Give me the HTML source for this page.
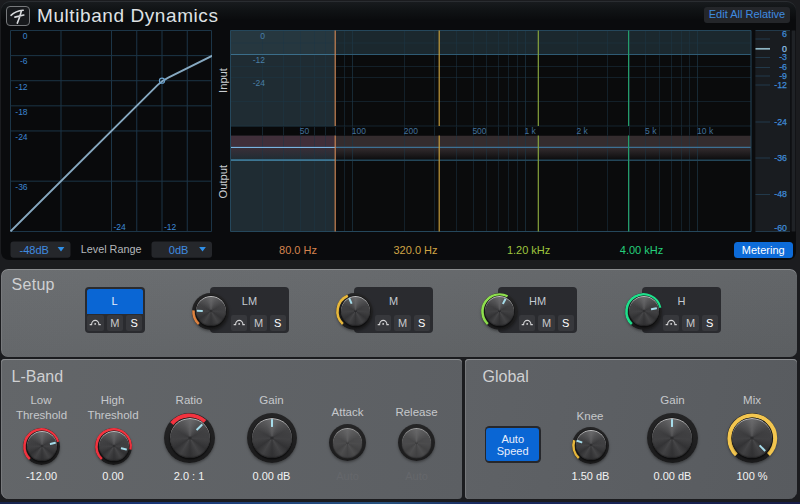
<!DOCTYPE html>
<html><head><meta charset="utf-8"><title>Multiband Dynamics</title>
<style>
html,body{margin:0;padding:0}
body{width:800px;height:504px;overflow:hidden;background:#1b1c1f;font-family:"Liberation Sans",Arial,sans-serif;position:relative}
.abs{position:absolute}
.top{left:1px;top:1.3px;width:795.4px;height:259px;background:linear-gradient(180deg,#191c1f 0,#111416 8px,#0a0b0d 19px,#0a0b0d 100%);border-radius:9px 9px 8px 8px;box-shadow:inset 0 1px 0 #2a2d31}
.panel{position:absolute;border-radius:7px;box-shadow:inset 0 1px 0 #8b8d90, inset 1px 0 0 #77797c}
.t{position:absolute;white-space:nowrap;line-height:1}
.c{transform:translateX(-50%);text-align:center}
.lab{color:#c6c8cb;font-size:11.5px}
.val{color:#f2f2f2;font-size:11px}
.h{color:#cfd0d2;font-size:16px}
.bl{color:#3e8ad8;font-size:9px}
.box{position:absolute;background:#2a2b2f;border-radius:4px}
.sb{position:absolute;background:#37383c;border-radius:2px;width:16.4px;height:15.6px;top:28.7px;color:#c9c9cb;font-size:11px;line-height:17.2px;text-align:center}
svg{position:absolute;left:0;top:0}
.kr{position:absolute;border-radius:50%;background:linear-gradient(180deg,#252526,#1b1b1c);box-shadow:0 1.5px 2.5px rgba(0,0,0,.35)}
.kc{position:absolute;border-radius:50%;background:radial-gradient(circle at 50% 50%,rgba(20,20,21,.55) 0,rgba(20,20,21,0) 9%),linear-gradient(180deg,rgba(255,255,255,.13) 0%,rgba(255,255,255,0) 45%,rgba(0,0,0,.16) 100%),conic-gradient(from 0deg,#575759 0deg,#464648 25deg,#39393b 60deg,#424244 95deg,#363638 125deg,#4a4a4c 150deg,#38383a 180deg,#4a4a4c 210deg,#363638 235deg,#424244 265deg,#39393b 300deg,#464648 335deg,#575759 360deg);box-shadow:inset 0 .9px .6px rgba(255,255,255,.55),inset 0 -1px 1px rgba(0,0,0,.3),0 0 0 .5px rgba(18,18,19,.9),0 1.6px 1.8px rgba(0,0,0,.65)}
.kd{filter:brightness(.9) contrast(.75)}
.kp{position:absolute;background:#a6dcea;border-radius:.4px}
</style></head><body>

<div class="abs top"></div>
<div class="panel" style="left:1px;top:269px;width:796px;height:87.5px;background:linear-gradient(180deg,rgba(255,255,255,.025),rgba(0,0,0,.035)),linear-gradient(100deg,#686b6e 0%,#5f6265 100%)"></div>
<div class="panel" style="left:1px;top:358.5px;width:461px;height:140.4px;border-radius:4px 4px 4px 8px;background:linear-gradient(100deg,#636669 0%,#5c5f63 100%)"></div>
<div class="panel" style="left:464.5px;top:358.5px;width:332.5px;height:140.4px;border-radius:4px 4px 8px 4px;background:linear-gradient(100deg,#5f6266 0%,#585b5f 100%)"></div>
<div class="abs" style="left:0;top:501.8px;width:800px;height:2.2px;background:linear-gradient(90deg,#18244c,#1a3778 20%,#27527f 48%,#192a60 60%,#171c47 100%)"></div>
<div class="abs" style="left:6px;top:6px;width:22px;height:18px;border:1px solid #77797c;border-radius:4px;background:#17191c"></div>
<div class="t" style="left:37px;top:5.6px;font-size:19px;letter-spacing:.58px;color:#dfe1e4">Multiband Dynamics</div>
<div class="t" style="left:703.7px;top:7.4px;width:86.6px;height:15.8px;background:#24262a;border-radius:3px;color:#3f8be0;font-size:11px;line-height:15.5px;text-align:center">Edit All Relative</div>
<div class="t" style="left:733.5px;top:241.5px;width:59.5px;height:16.5px;background:#0d6bd8;border-radius:3.5px;color:#fff;font-size:11px;line-height:16.5px;text-align:center">Metering</div>
<div class="box" style="left:84.5px;top:286.5px;width:60.5px;height:46.5px"><div class="abs" style="left:2px;top:2px;width:56.5px;height:25px;background:#0a66d4;border-radius:2.5px 2.5px 0 0"></div><div class="t c" style="left:30px;top:9.5px;font-size:11px;color:#e8eefc">L</div><div class="sb" style="left:2.8px"><svg width="16" height="16" viewBox="0 0 16 16" style="left:0;top:0"><path d="M2.7 9.6H4.6A3.65 4.2 0 0 1 11.9 9.6H13.8" fill="none" stroke="#d2d2d4" stroke-width="1.15"/><circle cx="8.2" cy="8.9" r=".95" fill="#d2d2d4"/></svg></div><div class="sb" style="left:22.1px">M</div><div class="sb" style="left:41.4px;color:#fff">S</div></div>
<div class="box" style="left:210px;top:286.5px;width:78.5px;height:46.5px;z-index:-0"><div class="t c" style="left:39.5px;top:9.5px;font-size:11px;color:#c3c9d0">LM</div><div class="sb" style="left:21px"><svg width="16" height="16" viewBox="0 0 16 16" style="left:0;top:0"><path d="M2.7 9.6H4.6A3.65 4.2 0 0 1 11.9 9.6H13.8" fill="none" stroke="#d2d2d4" stroke-width="1.15"/><circle cx="8.2" cy="8.9" r=".95" fill="#d2d2d4"/></svg></div><div class="sb" style="left:40.3px">M</div><div class="sb" style="left:59.6px;color:#fff">S</div></div>
<div class="box" style="left:354px;top:286.5px;width:78.5px;height:46.5px;z-index:-0"><div class="t c" style="left:39.5px;top:9.5px;font-size:11px;color:#c3c9d0">M</div><div class="sb" style="left:21px"><svg width="16" height="16" viewBox="0 0 16 16" style="left:0;top:0"><path d="M2.7 9.6H4.6A3.65 4.2 0 0 1 11.9 9.6H13.8" fill="none" stroke="#d2d2d4" stroke-width="1.15"/><circle cx="8.2" cy="8.9" r=".95" fill="#d2d2d4"/></svg></div><div class="sb" style="left:40.3px">M</div><div class="sb" style="left:59.6px;color:#fff">S</div></div>
<div class="box" style="left:498px;top:286.5px;width:78.5px;height:46.5px;z-index:-0"><div class="t c" style="left:39.5px;top:9.5px;font-size:11px;color:#c3c9d0">HM</div><div class="sb" style="left:21px"><svg width="16" height="16" viewBox="0 0 16 16" style="left:0;top:0"><path d="M2.7 9.6H4.6A3.65 4.2 0 0 1 11.9 9.6H13.8" fill="none" stroke="#d2d2d4" stroke-width="1.15"/><circle cx="8.2" cy="8.9" r=".95" fill="#d2d2d4"/></svg></div><div class="sb" style="left:40.3px">M</div><div class="sb" style="left:59.6px;color:#fff">S</div></div>
<div class="box" style="left:642px;top:286.5px;width:78.5px;height:46.5px;z-index:-0"><div class="t c" style="left:39.5px;top:9.5px;font-size:11px;color:#c3c9d0">H</div><div class="sb" style="left:21px"><svg width="16" height="16" viewBox="0 0 16 16" style="left:0;top:0"><path d="M2.7 9.6H4.6A3.65 4.2 0 0 1 11.9 9.6H13.8" fill="none" stroke="#d2d2d4" stroke-width="1.15"/><circle cx="8.2" cy="8.9" r=".95" fill="#d2d2d4"/></svg></div><div class="sb" style="left:40.3px">M</div><div class="sb" style="left:59.6px;color:#fff">S</div></div>
<svg width="800" height="504" viewBox="0 0 800 504" font-family="Liberation Sans, Arial, sans-serif">
<defs>
<linearGradient id="ring" x1="0" y1="0" x2="0" y2="1"><stop offset="0" stop-color="#262627"/><stop offset="1" stop-color="#1a1a1b"/></linearGradient>
<linearGradient id="cap" x1="0" y1="0" x2="0" y2="1"><stop offset="0" stop-color="#505052"/><stop offset=".45" stop-color="#323234"/><stop offset="1" stop-color="#242425"/></linearGradient>
<radialGradient id="capc" cx=".5" cy=".5" r=".5"><stop offset="0" stop-color="#1c1c1d" stop-opacity=".55"/><stop offset=".7" stop-color="#2a2a2b" stop-opacity=".15"/><stop offset="1" stop-color="#2a2a2b" stop-opacity="0"/></radialGradient>
<linearGradient id="rim" x1="0" y1="0" x2="0" y2="1"><stop offset="0" stop-color="#b4b4b6"/><stop offset=".5" stop-color="#5a5a5c" stop-opacity=".5"/><stop offset="1" stop-color="#1a1a1b" stop-opacity="0"/></linearGradient>
<linearGradient id="fade" x1="0" y1="0" x2="0" y2="1"><stop offset="0" stop-color="#342c2f"/><stop offset="1" stop-color="#0b0c0d"/></linearGradient>
<linearGradient id="fadeS" x1="0" y1="0" x2="0" y2="1"><stop offset="0" stop-color="#3a2f38"/><stop offset="1" stop-color="#1f2c33"/></linearGradient>
</defs>
<path d="M11 15.3Q15.5 11 23.2 10.3M21.5 10.6Q19.6 18 17.3 23.1M14.9 17.1L23.8 15" fill="none" stroke="#d9dbde" stroke-width="1.6" stroke-linecap="round"/>
<rect x="10.5" y="30.5" width="201" height="201" fill="#090a0c"/>
<clipPath id="lg"><rect x="10" y="30" width="202" height="202"/></clipPath>
<path d="M61.00 30.5V231.5M10.5 181.18H211.5M111.50 30.5V231.5M10.5 130.95H211.5M136.75 30.5V231.5M10.5 105.84H211.5M162.00 30.5V231.5M10.5 80.72H211.5M187.25 30.5V231.5M10.5 55.61H211.5M10.5 30.5H211.5V231.5H10.5Z" stroke="#1c3547" stroke-width="1" fill="none"/>
<path d="M10.50 231.40L157.79 84.91Q162.00 80.72 168.31 77.59L212.50 55.61" fill="none" stroke="#86a8c0" stroke-width="1.9" clip-path="url(#lg)"/>
<circle cx="162.00" cy="80.72" r="2.6" fill="none" stroke="#6aa2cf" stroke-width="1.1"/>
<text x="27.6" y="39.30" font-size="8.5" fill="#3c84d0" text-anchor="end">0</text>
<text x="27.6" y="64.41" font-size="8.5" fill="#3c84d0" text-anchor="end">-6</text>
<text x="27.6" y="89.52" font-size="8.5" fill="#3c84d0" text-anchor="end">-12</text>
<text x="27.6" y="114.64" font-size="8.5" fill="#3c84d0" text-anchor="end">-18</text>
<text x="27.6" y="139.75" font-size="8.5" fill="#3c84d0" text-anchor="end">-24</text>
<text x="27.6" y="189.98" font-size="8.5" fill="#3c84d0" text-anchor="end">-36</text>
<text x="113.5" y="229.5" font-size="8.5" fill="#3f8ad6">-24</text>
<text x="164.0" y="229.5" font-size="8.5" fill="#3f8ad6">-12</text>
<rect x="230.5" y="30.5" width="520.5" height="201.0" fill="#0a0b0c"/>
<rect x="230.5" y="30.5" width="520.5" height="23.799999999999997" fill="#1b282e"/>
<rect x="230.5" y="30.5" width="104.69999999999999" height="201.0" fill="#1f2c33"/>
<rect x="230.5" y="30.5" width="104.69999999999999" height="23.799999999999997" fill="#26373f"/>
<rect x="230.5" y="135.5" width="520.5" height="12.0" fill="#342c2e"/>
<rect x="230.5" y="147.5" width="520.5" height="12.5" fill="url(#fade)"/>
<rect x="230.5" y="135.5" width="104.69999999999999" height="12.0" fill="#402f3a"/>
<rect x="230.5" y="147.5" width="104.69999999999999" height="12.5" fill="url(#fadeS)"/>
<path d="M262.5 30.5V231.5M283.5 30.5V231.5M300.5 30.5V231.5M314.5 30.5V231.5M325.5 30.5V231.5M335.5 30.5V231.5M344.5 30.5V231.5M404.5 30.5V231.5M434.5 30.5V231.5M456.5 30.5V231.5M473.5 30.5V231.5M486.5 30.5V231.5M498.5 30.5V231.5M508.5 30.5V231.5M517.5 30.5V231.5M577.5 30.5V231.5M607.5 30.5V231.5M629.5 30.5V231.5M645.5 30.5V231.5M659.5 30.5V231.5M671.5 30.5V231.5M681.5 30.5V231.5M689.5 30.5V231.5" stroke="#1c3646" stroke-width="1" fill="none" opacity=".5"/>
<path d="M352.5 30.5V231.5M525.5 30.5V231.5M697.5 30.5V231.5" stroke="#1c3646" stroke-width="1" fill="none" opacity=".7"/>
<path d="M230.5 43H751M230.5 66.5H751M230.5 77.5H751M230.5 101.5H751" stroke="#1c3646" stroke-width="1" fill="none" opacity=".5"/>
<path d="M230.5 54.5H751" stroke="#2f5b74" stroke-width="1" fill="none"/>
<path d="M230.5 54.5H335.2" stroke="#3b6e8a" stroke-width="1" fill="none"/>
<rect x="230.5" y="126.5" width="520.5" height="9.0" fill="#08090a"/>
<path d="M230.5 126.0H751" stroke="#1c3646" stroke-width="1" opacity=".6"/>
<path d="M262.5 126.5V135.5M283.5 126.5V135.5M300.5 126.5V135.5M314.5 126.5V135.5M325.5 126.5V135.5M335.5 126.5V135.5M344.5 126.5V135.5M352.5 126.5V135.5M404.5 126.5V135.5M434.5 126.5V135.5M456.5 126.5V135.5M473.5 126.5V135.5M486.5 126.5V135.5M498.5 126.5V135.5M508.5 126.5V135.5M517.5 126.5V135.5M525.5 126.5V135.5M577.5 126.5V135.5M607.5 126.5V135.5M629.5 126.5V135.5M645.5 126.5V135.5M659.5 126.5V135.5M671.5 126.5V135.5M681.5 126.5V135.5M689.5 126.5V135.5M697.5 126.5V135.5" stroke="#15242e" stroke-width="1" fill="none"/>
<text x="299.7" y="133.9" font-size="8.5" fill="#41709a">50</text>
<text x="351.7" y="133.9" font-size="8.5" fill="#41709a">100</text>
<text x="403.7" y="133.9" font-size="8.5" fill="#41709a">200</text>
<text x="472.4" y="133.9" font-size="8.5" fill="#41709a">500</text>
<text x="524.4" y="133.9" font-size="8.5" fill="#41709a">1 k</text>
<text x="576.4" y="133.9" font-size="8.5" fill="#41709a">2 k</text>
<text x="645.1" y="133.9" font-size="8.5" fill="#41709a">5 k</text>
<text x="697.1" y="133.9" font-size="8.5" fill="#41709a">10 k</text>
<path d="M230.5 147.4H751" stroke="#3d7094" stroke-width="1.1"/>
<path d="M230.5 147.5H335.2" stroke="#7ab4e2" stroke-width="1.2"/>
<path d="M230.5 160.2H751" stroke="#234659" stroke-width="1.4"/>
<path d="M230.5 160.2H335.2" stroke="#3d7693" stroke-width="1.8"/>
<path d="M230.5 30.5H751M230.5 231.5H751M230.5 30.5V231.5M751 30.5V231.5" stroke="#25475b" stroke-width="1" fill="none"/>
<path d="M335.2 30.5V126.0M335.2 135.5V231.5" stroke="#cf8450" stroke-width="1.15"/>
<path d="M439.2 30.5V126.0M439.2 135.5V231.5" stroke="#c9a03c" stroke-width="1.15"/>
<path d="M538.3 30.5V126.0M538.3 135.5V231.5" stroke="#8aa83e" stroke-width="1.15"/>
<path d="M628.6 30.5V126.0M628.6 135.5V231.5" stroke="#25a06c" stroke-width="1.15"/>
<text x="265" y="38.8" font-size="8.5" fill="#4a7fa6" text-anchor="end">0</text>
<text x="265" y="62.9" font-size="8.5" fill="#4a7fa6" text-anchor="end">-12</text>
<text x="265" y="86.4" font-size="8.5" fill="#4a7fa6" text-anchor="end">-24</text>
<text transform="translate(226.7,80.5) rotate(-90)" font-size="11.2" fill="#c9cdd1" text-anchor="middle">Input</text>
<text transform="translate(226.7,181.7) rotate(-90)" font-size="11.2" fill="#c9cdd1" text-anchor="middle">Output</text>
<text x="298" y="253.5" font-size="11" fill="#d58450" text-anchor="middle">80.0 Hz</text>
<text x="415.5" y="253.5" font-size="11" fill="#d0a545" text-anchor="middle">320.0 Hz</text>
<text x="528.6" y="253.5" font-size="11" fill="#9fc53e" text-anchor="middle">1.20 kHz</text>
<text x="641.5" y="253.5" font-size="11" fill="#25cf7c" text-anchor="middle">4.00 kHz</text>
<rect x="755.3" y="30.5" width="35" height="201" fill="#191c20"/>
<rect x="791.6" y="30.5" width="3.8" height="201" fill="#1f2226"/>
<path d="M755.5 39.0H770M755.5 57.5H770M755.5 67.5H770M755.5 76.0H770M755.5 85.0H770M755.5 122.0H770M755.5 158.0H770M755.5 194.5H770" stroke="#22394a" stroke-width="1" fill="none"/>
<path d="M755.5 30.5H790M755.5 231.5H790" stroke="#22394a" stroke-width="1" fill="none"/>
<path d="M755.5 48.8H770" stroke="#8fb6c4" stroke-width="1.7" fill="none"/>
<text x="787" y="37.2" font-size="8.8" fill="#3f8ad6" text-anchor="end" stroke="#3f8ad6" stroke-width=".25">6</text>
<text x="787" y="51.6" font-size="8.8" fill="#8fc0ea" text-anchor="end" stroke="#8fc0ea" stroke-width=".25">0</text>
<text x="787" y="60.3" font-size="8.8" fill="#3f8ad6" text-anchor="end" stroke="#3f8ad6" stroke-width=".25">-3</text>
<text x="787" y="70.3" font-size="8.8" fill="#3f8ad6" text-anchor="end" stroke="#3f8ad6" stroke-width=".25">-6</text>
<text x="787" y="78.8" font-size="8.8" fill="#3f8ad6" text-anchor="end" stroke="#3f8ad6" stroke-width=".25">-9</text>
<text x="787" y="87.8" font-size="8.8" fill="#3f8ad6" text-anchor="end" stroke="#3f8ad6" stroke-width=".25">-12</text>
<text x="787" y="124.8" font-size="8.8" fill="#3f8ad6" text-anchor="end" stroke="#3f8ad6" stroke-width=".25">-24</text>
<text x="787" y="160.8" font-size="8.8" fill="#3f8ad6" text-anchor="end" stroke="#3f8ad6" stroke-width=".25">-36</text>
<text x="787" y="197.3" font-size="8.8" fill="#3f8ad6" text-anchor="end" stroke="#3f8ad6" stroke-width=".25">-48</text>
<text x="787" y="231.0" font-size="8.8" fill="#3f8ad6" text-anchor="end" stroke="#3f8ad6" stroke-width=".25">-60</text>
<rect x="10.5" y="241.5" width="60" height="16.2" rx="3" fill="#25272b"/>
<text x="34.2" y="253.5" font-size="11" fill="#3f8be0" text-anchor="middle">-48dB</text>
<path d="M57.6 247.1h6.8l-3.4 4.3z" fill="#2f8fe8"/>
<rect x="151.5" y="241.5" width="60.5" height="16.2" rx="3" fill="#25272b"/>
<text x="178.65" y="253.5" font-size="11" fill="#3f8be0" text-anchor="middle">0dB</text>
<path d="M199.1 247.1h6.8l-3.4 4.3z" fill="#2f8fe8"/>
<text x="80.8" y="253.4" font-size="10.8" fill="#b4b7bb">Level Range</text>
</svg>
<div class="kr" style="left:192.10px;top:292.70px;width:37.00px;height:37.00px"></div><svg width="43.00" height="43.00" style="left:189.10px;top:289.70px"><path d="M9.87 33.97A17.05 17.05 0 0 1 4.49 20.31" fill="none" stroke="#e08440" stroke-width="2.6"/></svg><div class="kc" style="left:196.30px;top:296.00px;width:29.80px;height:29.80px"></div><div class="kp" style="left:209.60px;top:297.00px;width:2.0px;height:5.90px;transform-origin:1.0px 14.20px;transform:rotate(-88deg)"></div>
<div class="kr" style="left:336.30px;top:292.70px;width:37.00px;height:37.00px"></div><svg width="43.00" height="43.00" style="left:333.30px;top:289.70px"><path d="M9.87 33.97A17.05 17.05 0 0 1 14.84 5.81" fill="none" stroke="#e8b83c" stroke-width="2.6"/></svg><div class="kc" style="left:340.50px;top:296.00px;width:29.80px;height:29.80px"></div><div class="kp" style="left:353.80px;top:297.00px;width:2.0px;height:5.90px;transform-origin:1.0px 14.20px;transform:rotate(-24deg)"></div>
<div class="kr" style="left:480.50px;top:292.70px;width:37.00px;height:37.00px"></div><svg width="43.00" height="43.00" style="left:477.50px;top:289.70px"><path d="M9.87 33.97A17.05 17.05 0 0 1 29.50 6.45" fill="none" stroke="#8ee04e" stroke-width="2.6"/></svg><div class="kc" style="left:484.70px;top:296.00px;width:29.80px;height:29.80px"></div><div class="kp" style="left:498.00px;top:297.00px;width:2.0px;height:5.90px;transform-origin:1.0px 14.20px;transform:rotate(28deg)"></div>
<div class="kr" style="left:624.80px;top:292.70px;width:37.00px;height:37.00px"></div><svg width="43.00" height="43.00" style="left:621.80px;top:289.70px"><path d="M9.87 33.97A17.05 17.05 0 1 1 38.15 17.81" fill="none" stroke="#1fe08c" stroke-width="2.6"/></svg><div class="kc" style="left:629.00px;top:296.00px;width:29.80px;height:29.80px"></div><div class="kp" style="left:642.30px;top:297.00px;width:2.0px;height:5.90px;transform-origin:1.0px 14.20px;transform:rotate(77.5deg)"></div>
<div class="kr" style="left:23.10px;top:427.70px;width:37.00px;height:37.00px"></div><svg width="43.00" height="43.00" style="left:20.10px;top:424.70px"><path d="M9.87 33.97A17.05 17.05 0 1 1 37.89 16.80" fill="none" stroke="#f2333f" stroke-width="2.6"/></svg><div class="kc" style="left:27.30px;top:431.00px;width:29.80px;height:29.80px"></div><div class="kp" style="left:40.60px;top:432.00px;width:2.0px;height:5.90px;transform-origin:1.0px 14.20px;transform:rotate(75.5deg)"></div>
<div class="kr" style="left:94.70px;top:427.70px;width:37.00px;height:37.00px"></div><svg width="43.00" height="43.00" style="left:91.70px;top:424.70px"><path d="M9.87 33.97A17.05 17.05 0 1 1 38.29 24.46" fill="none" stroke="#f2333f" stroke-width="2.6"/></svg><div class="kc" style="left:98.90px;top:431.00px;width:29.80px;height:29.80px"></div><div class="kp" style="left:112.20px;top:432.00px;width:2.0px;height:5.90px;transform-origin:1.0px 14.20px;transform:rotate(104deg)"></div>
<div class="kr" style="left:164.20px;top:412.70px;width:50.60px;height:50.60px"></div><svg width="56.60" height="56.60" style="left:161.20px;top:409.70px"><path d="M10.80 13.61A22.849999999999998 22.849999999999998 0 0 1 43.88 11.59" fill="none" stroke="#f2333f" stroke-width="4.1"/></svg><div class="kc" style="left:169.50px;top:418.00px;width:40.00px;height:40.00px"></div><div class="kp" style="left:188.40px;top:419.30px;width:2.2px;height:8.00px;transform-origin:1.1px 18.70px;transform:rotate(45deg)"></div>
<div class="kr" style="left:246.80px;top:412.70px;width:50.60px;height:50.60px"></div><svg width="56.60" height="56.60" style="left:243.80px;top:409.70px"></svg><div class="kc" style="left:252.10px;top:418.00px;width:40.00px;height:40.00px"></div><div class="kp" style="left:271.00px;top:419.30px;width:2.2px;height:8.00px;transform-origin:1.1px 18.70px;transform:rotate(0deg)"></div>
<div class="kr" style="left:328.80px;top:424.40px;width:37.00px;height:37.00px"></div><svg width="43.00" height="43.00" style="left:325.80px;top:421.40px"></svg><div class="kc kd" style="left:332.60px;top:428.20px;width:29.40px;height:29.40px"></div>
<div class="kr" style="left:397.80px;top:424.40px;width:37.00px;height:37.00px"></div><svg width="43.00" height="43.00" style="left:394.80px;top:421.40px"></svg><div class="kc kd" style="left:401.60px;top:428.20px;width:29.40px;height:29.40px"></div>
<div class="kr" style="left:571.70px;top:426.90px;width:37.00px;height:37.00px"></div><svg width="43.00" height="43.00" style="left:568.70px;top:423.90px"><path d="M9.87 33.97A17.05 17.05 0 0 1 5.28 16.23" fill="none" stroke="#e8b83c" stroke-width="2.6"/></svg><div class="kc" style="left:575.90px;top:430.20px;width:29.80px;height:29.80px"></div><div class="kp" style="left:589.20px;top:431.20px;width:2.0px;height:5.90px;transform-origin:1.0px 14.20px;transform:rotate(-71deg)"></div>
<div class="kr" style="left:647.00px;top:412.70px;width:50.60px;height:50.60px"></div><svg width="56.60" height="56.60" style="left:644.00px;top:409.70px"></svg><div class="kc" style="left:652.30px;top:418.00px;width:40.00px;height:40.00px"></div><div class="kp" style="left:671.20px;top:419.30px;width:2.2px;height:8.00px;transform-origin:1.1px 18.70px;transform:rotate(0deg)"></div>
<div class="kr" style="left:726.70px;top:412.70px;width:50.60px;height:50.60px"></div><svg width="56.60" height="56.60" style="left:723.70px;top:409.70px"><path d="M12.43 44.74A22.849999999999998 22.849999999999998 0 1 1 44.46 44.46" fill="none" stroke="#f3c64f" stroke-width="4.1"/></svg><div class="kc" style="left:732.00px;top:418.00px;width:40.00px;height:40.00px"></div><div class="kp" style="left:750.90px;top:419.30px;width:2.2px;height:8.00px;transform-origin:1.1px 18.70px;transform:rotate(136deg)"></div>
<div class="t h" style="left:11.5px;top:277.4px;letter-spacing:.3px">Setup</div>
<div class="t h" style="left:11.5px;top:368.7px">L-Band</div>
<div class="t h" style="left:482.5px;top:368.7px">Global</div>
<div class="t c lab" style="left:41px;top:394.5px">Low</div>
<div class="t c lab" style="left:41.5px;top:410px">Threshold</div>
<div class="t c lab" style="left:112.5px;top:394.5px">High</div>
<div class="t c lab" style="left:113px;top:410px">Threshold</div>
<div class="t c lab" style="left:189px;top:394.5px">Ratio</div>
<div class="t c lab" style="left:271.5px;top:394.5px">Gain</div>
<div class="t c lab" style="left:347.5px;top:407px">Attack</div>
<div class="t c lab" style="left:416.5px;top:407px">Release</div>
<div class="t c lab" style="left:590px;top:410.5px">Knee</div>
<div class="t c lab" style="left:672.5px;top:394.5px">Gain</div>
<div class="t c lab" style="left:752px;top:394.5px">Mix</div>
<div class="t c val" style="left:41.5px;top:470.5px">-12.00</div>
<div class="t c val" style="left:113px;top:470.5px">0.00</div>
<div class="t c val" style="left:189px;top:470.5px">2.0 : 1</div>
<div class="t c val" style="left:271.5px;top:470.5px">0.00 dB</div>
<div class="t c val" style="left:590.5px;top:470.5px">1.50 dB</div>
<div class="t c val" style="left:672.5px;top:470.5px">0.00 dB</div>
<div class="t c val" style="left:752px;top:470.5px">100 %</div>
<div class="t c" style="left:347.5px;top:470.5px;font-size:11px;color:#65676b">Auto</div>
<div class="t c" style="left:416.5px;top:470.5px;font-size:11px;color:#65676b">Auto</div>
<div class="abs" style="left:484.5px;top:426.3px;width:56.3px;height:36.8px;background:#26272b;border-radius:4.5px"></div>
<div class="abs" style="left:486.3px;top:428.1px;width:52.8px;height:33.2px;background:#0a66d4;border-radius:3px;color:#e8eefc;font-size:11px;line-height:12px;text-align:center"><div style="margin-top:5px">Auto<br>Speed</div></div>
</body></html>
